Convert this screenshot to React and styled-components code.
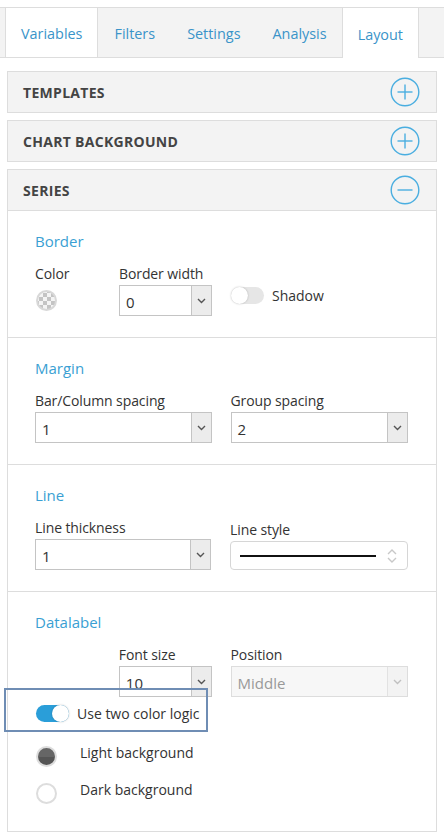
import React from 'react';
import styled, { createGlobalStyle } from 'styled-components';

const GlobalStyle = createGlobalStyle`
    body {
        margin: 0;
        background: #ffffff;
        font-family: 'Open Sans', 'Liberation Sans', sans-serif;
        color: #333333;
    }
`

const Page = styled.div`
    width: 444px;
    padding-top: 7px;
`

const TabBar = styled.div`
    display: flex;
    height: 49px;
    padding-left: 6px;
    background: #f3f3f3;
    border-top: 1px solid #dddddd;
    border-bottom: 1px solid #dddddd;
`

const Tab = styled.div`
    display: flex;
    align-items: center;
    padding: 2px 15px 0 15px;
    box-sizing: border-box;
    font-size: 14.4px;
    color: #3a94c9;
    background: ${props => props.$white ? '#ffffff' : 'transparent'};
    border-left: 1px solid ${props => props.$white ? '#dddddd' : 'transparent'};
    border-right: 1px solid ${props => props.$white ? '#dddddd' : 'transparent'};
    margin-left: ${props => props.$white ? '-1px' : '0'};
    height: ${props => props.$active ? '50px' : '49px'};
    position: relative;
    z-index: ${props => props.$active ? 1 : 0};
`

const Content = styled.div`
    padding: 13px 7px 8px 7px;
    display: flex;
    flex-direction: column;
    gap: 7px;
`

const Panel = styled.div`
    border: 1px solid #dddddd;
`

const PanelHeader = styled.div`
    height: 40px;
    display: flex;
    align-items: center;
    justify-content: space-between;
    padding: 0 16px 0 15px;
    background: #f3f3f3;
    border-bottom: ${props => props.$open ? '1px solid #dddddd' : 'none'};
`

const PanelTitle = styled.h3`
    margin: 0;
    font-size: 14px;
    font-weight: 700;
    color: #444444;
    letter-spacing: 0.3px;
`

const Section = styled.div`
    padding: 20px 28px ${props => props.$last ? 27 : 21}px 27px;
    border-bottom: ${props => props.$last ? 'none' : '1px solid #dddddd'};
`

const SectionTitle = styled.h4`
    margin: 0 0 14px 0;
    font-size: 15px;
    line-height: 20px;
    font-weight: 400;
    color: #3a9fd3;
`

const Row = styled.div`
    display: flex;
    gap: 19px;
    align-items: flex-start;
`

const Field = styled.div`
    width: ${props => props.$w}px;
    display: flex;
    flex-direction: column;
`

const Label = styled.div`
    font-size: 14px;
    line-height: 18px;
    color: #333333;
    height: ${props => props.$shift ? 18 : 20}px;
    margin-top: ${props => props.$shift ? 2 : 0}px;
    letter-spacing: -0.1px;
`

const SelectBox = styled.div`
    height: 31px;
    box-sizing: border-box;
    display: flex;
    border: 1px solid #c4c4c4;
    background: ${props => props.$disabled ? '#f7f7f7' : '#ffffff'};
    border-color: ${props => props.$disabled ? '#dddddd' : '#c4c4c4'};
`

const SelectValue = styled.div`
    flex: 1;
    display: flex;
    align-items: center;
    padding: 2px 0 0 6px;
    font-size: 15px;
    color: ${props => props.$disabled ? '#999999' : '#333333'};
`

const SelectArrow = styled.div`
    width: 19px;
    display: flex;
    align-items: center;
    justify-content: center;
    background: ${props => props.$disabled ? '#f3f3f3' : '#ececec'};
    border-left: 1px solid ${props => props.$disabled ? '#e2e2e2' : '#c4c4c4'};
    color: ${props => props.$disabled ? '#c0c0c0' : '#555555'};
`

const Swatch = styled.div`
    width: 21px;
    height: 21px;
    margin: 5px 0 0 1px;
    box-sizing: border-box;
    border-radius: 50%;
    border: 2px solid #d8d8d8;
    background: repeating-conic-gradient(#c4c4c4 0 25%, #f4f4f4 0 50%) 1px 1px / 8px 8px;
`

const ToggleWrap = styled.div`
    display: flex;
    align-items: center;
    gap: 8px;
    padding-top: ${props => props.$top || 0}px;
`

const Track = styled.div`
    width: 33px;
    height: 17px;
    border-radius: 9px;
    background: ${props => props.$on ? '#2a9ed9' : '#e6e6e6'};
    position: relative;
    flex-shrink: 0;
`

const Knob = styled.div`
    position: absolute;
    top: 0;
    left: ${props => props.$on ? '16px' : '0'};
    width: 17px;
    height: 17px;
    border-radius: 50%;
    background: #ffffff;
    box-shadow: 0 0 2px rgba(0,0,0,0.25);
`

const ToggleText = styled.span`
    font-size: 14px;
    color: #333333;
    margin-left: ${props => props.$ml || 0}px;
`

const LineBox = styled.div`
    height: 29px;
    margin-top: 2px;
    box-sizing: border-box;
    border: 1px solid #d6d6d6;
    border-radius: 4px;
    display: flex;
    align-items: center;
    padding: 0 9px 0 9px;
    gap: 10px;
`

const LineSample = styled.div`
    flex: 1;
    height: 2px;
    background: #111111;
`

const OptionRow = styled.div`
    display: flex;
    align-items: center;
    margin-top: ${props => props.$mt}px;
    padding-left: 1px;
    position: relative;
`

const Radio = styled.div`
    width: 21px;
    height: 21px;
    box-sizing: border-box;
    border-radius: 50%;
    border: 2px solid #dddddd;
    background: ${props => props.$checked ? 'linear-gradient(#666666 50%, #555555 50%)' : '#ffffff'};
    margin-top: 2px;
`

const RadioLabel = styled.span`
    font-size: 14px;
    line-height: 18px;
    color: #333333;
    margin-left: 23px;
    align-self: flex-start;
`

const Highlight = styled.div`
    position: absolute;
    left: -31px;
    top: -16px;
    width: 200px;
    height: 40px;
    border: 2px solid #6f8db4;
    pointer-events: none;
`

const CircleIcon = ({ minus }) => (
    <svg width="30" height="30" viewBox="0 0 30 30">
        <circle cx="15" cy="15" r="13.8" fill="none" stroke="#4aaee0" strokeWidth="1.4" />
        <line x1="7.5" y1="15" x2="22.5" y2="15" stroke="#4aaee0" strokeWidth="1.4" />
        {!minus && <line x1="15" y1="7.5" x2="15" y2="22.5" stroke="#4aaee0" strokeWidth="1.4" />}
    </svg>
)

const Chevron = () => (
    <svg width="9" height="6" viewBox="0 0 9 6">
        <path d="M1 1 L4.5 4.5 L8 1" fill="none" stroke="currentColor" strokeWidth="1.4" />
    </svg>
)

const Select = ({ value, disabled }) => (
    <SelectBox $disabled={disabled}>
        <SelectValue $disabled={disabled}>{value}</SelectValue>
        <SelectArrow $disabled={disabled}><Chevron /></SelectArrow>
    </SelectBox>
)

const Toggle = ({ on }) => (
    <Track $on={on}><Knob $on={on} /></Track>
)

export default function App() {
    return (
        <Page>
            <GlobalStyle />
            <TabBar>
                <Tab $white>Variables</Tab>
                <Tab>Filters</Tab>
                <Tab>Settings</Tab>
                <Tab>Analysis</Tab>
                <Tab $white $active>Layout</Tab>
            </TabBar>
            <Content>
                <Panel>
                    <PanelHeader>
                        <PanelTitle>TEMPLATES</PanelTitle>
                        <CircleIcon />
                    </PanelHeader>
                </Panel>
                <Panel>
                    <PanelHeader>
                        <PanelTitle>CHART BACKGROUND</PanelTitle>
                        <CircleIcon />
                    </PanelHeader>
                </Panel>
                <Panel>
                    <PanelHeader $open>
                        <PanelTitle>SERIES</PanelTitle>
                        <CircleIcon minus />
                    </PanelHeader>

                    <Section>
                        <SectionTitle>Border</SectionTitle>
                        <Row>
                            <Field $w={65}>
                                <Label>Color</Label>
                                <Swatch />
                            </Field>
                            <Field $w={93}>
                                <Label>Border width</Label>
                                <Select value="0" />
                            </Field>
                            <ToggleWrap $top={21}>
                                <Toggle />
                                <ToggleText>Shadow</ToggleText>
                            </ToggleWrap>
                        </Row>
                    </Section>

                    <Section>
                        <SectionTitle>Margin</SectionTitle>
                        <Row>
                            <Field $w={177}>
                                <Label>Bar/Column spacing</Label>
                                <Select value="1" />
                            </Field>
                            <Field $w={178}>
                                <Label>Group spacing</Label>
                                <Select value="2" />
                            </Field>
                        </Row>
                    </Section>

                    <Section>
                        <SectionTitle>Line</SectionTitle>
                        <Row>
                            <Field $w={177}>
                                <Label>Line thickness</Label>
                                <Select value="1" />
                            </Field>
                            <Field $w={179}>
                                <Label $shift>Line style</Label>
                                <LineBox>
                                    <LineSample />
                                    <svg width="12" height="16" viewBox="0 0 12 16">
                                        <path d="M2 6 L6 2 L10 6 M2 10 L6 14 L10 10" fill="none" stroke="#c8c8c8" strokeWidth="1.4" />
                                    </svg>
                                </LineBox>
                            </Field>
                        </Row>
                    </Section>

                    <Section $last>
                        <SectionTitle>Datalabel</SectionTitle>
                        <Row>
                            <Field $w={65} />
                            <Field $w={93}>
                                <Label>Font size</Label>
                                <Select value="10" />
                            </Field>
                            <Field $w={178}>
                                <Label>Position</Label>
                                <Select value="Middle" disabled />
                            </Field>
                        </Row>
                        <OptionRow $mt={7}>
                            <Highlight />
                            <Toggle on />
                            <ToggleText $ml={8}>Use two color logic</ToggleText>
                        </OptionRow>
                        <OptionRow $mt={21}>
                            <Radio $checked />
                            <RadioLabel>Light background</RadioLabel>
                        </OptionRow>
                        <OptionRow $mt={14}>
                            <Radio />
                            <RadioLabel>Dark background</RadioLabel>
                        </OptionRow>
                    </Section>
                </Panel>
            </Content>
        </Page>
    );
}
